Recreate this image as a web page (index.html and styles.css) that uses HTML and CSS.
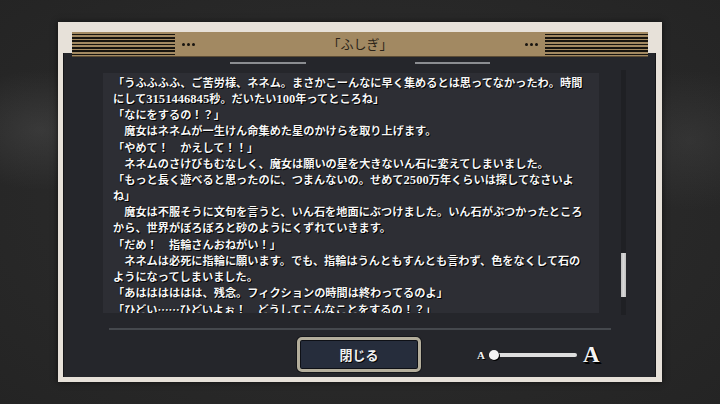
FILE: index.html
```html
<!DOCTYPE html>
<html lang="ja">
<head>
<meta charset="utf-8">
<link rel="stylesheet" href="styles.css">
</head>
<body>
<div class="frame">
  <div class="header">
    <div class="stripes"></div>
    <div class="dots"><span></span><span></span><span></span></div>
    <div class="title">「ふしぎ」</div>
    <div class="dots dots-right"><span></span><span></span><span></span></div>
    <div class="stripes"></div>
  </div>
  <div class="panel">
    <div class="tabs">
      <div class="tab"></div>
      <div class="tab tab-right"></div>
    </div>
    <div class="content">
      <div class="textbox">
        <div class="line">「うふふふふ、ご苦労様、ネネム。まさかこーんなに早く集めるとは思ってなかったわ。時間</div>
        <div class="line">にして<span class="num">3151446845</span>秒。だいたい<span class="num">100</span>年ってところね」</div>
        <div class="line">「なにをするの！？」</div>
        <div class="line">　魔女はネネムが一生けん命集めた星のかけらを取り上げます。</div>
        <div class="line">「やめて！　かえして！！」</div>
        <div class="line">　ネネムのさけびもむなしく、魔女は願いの星を大きないん石に変えてしまいました。</div>
        <div class="line">「もっと長く遊べると思ったのに、つまんないの。せめて<span class="num">2500</span>万年くらいは探してなさいよ</div>
        <div class="line">ね」</div>
        <div class="line">　魔女は不服そうに文句を言うと、いん石を地面にぶつけました。いん石がぶつかったところ</div>
        <div class="line">から、世界がぼろぼろと砂のようにくずれていきます。</div>
        <div class="line">「だめ！　指輪さんおねがい！」</div>
        <div class="line">　ネネムは必死に指輪に願います。でも、指輪はうんともすんとも言わず、色をなくして石の</div>
        <div class="line">ようになってしまいました。</div>
        <div class="line">「あはははははは、残念。フィクションの時間は終わってるのよ」</div>
        <div class="line">「ひどい<span class="cjk">……</span>ひどいよぉ！　どうしてこんなことをするの！？」</div>
      </div>
      <div class="scrolltrack"><div class="thumb"></div></div>
    </div>
    <div class="separator"></div>
    <div class="bottom">
      <div class="close-btn"><span>閉じる</span></div>
      <div class="slider">
        <span class="a-small">A</span>
        <div class="track"><div class="knob"></div></div>
        <span class="a-big">A</span>
      </div>
    </div>
  </div>
</div>
</body>
</html>
```
FILE: styles.css
```css
html, body {
  margin: 0;
  padding: 0;
}
body {
  width: 720px;
  height: 404px;
  overflow: hidden;
  background:
    radial-gradient(ellipse 90px 60px at 40px 130px, rgba(90,90,90,0.35), rgba(90,90,90,0) 100%),
    radial-gradient(ellipse 90px 70px at 690px 140px, rgba(80,80,80,0.3), rgba(80,80,80,0) 100%),
    radial-gradient(ellipse 500px 300px at 360px 200px, #2f2f2f, #242424 100%);
  font-family: "Liberation Serif", "Noto Sans CJK JP", serif;
}
.frame {
  margin: 22px 0 0 58px;
  width: 604px;
  height: 360px;
  box-sizing: border-box;
  background: #e7e1d9;
  padding-top: 10px;
  display: flex;
  flex-direction: column;
  box-shadow: 0 0 6px rgba(0,0,0,0.6);
}
.header {
  position: relative;
  z-index: 1;
  margin: 0 14px 0 14px;
  height: 25px;
  box-sizing: border-box;
  background: #a28962;
  border-bottom: 1px solid #5c4c35;
  display: flex;
  align-items: center;
}
.stripes {
  width: 103px;
  height: 24px;
  background: repeating-linear-gradient(to bottom, #a28962 0 1.6px, #17140f 1.6px 3.35px);
}
.dots {
  display: flex;
  gap: 2px;
  margin-left: 7px;
}
.dots-right {
  margin-left: 0;
  margin-right: 7px;
}
.dots span {
  width: 3px;
  height: 3px;
  border-radius: 50%;
  background: #17140f;
}
.title {
  flex: 1;
  text-align: center;
  font-family: "Noto Sans CJK JP", sans-serif;
  font-size: 13px;
  color: #2a2318;
  line-height: 24px;
}
.panel {
  margin: -4px 6px 5px 5px;
  height: 324px;
  background: #25262b;
  box-shadow: inset 1px 0 0 #151518, inset -1px 0 0 #151518;
  display: flex;
  flex-direction: column;
}
.tabs {
  display: flex;
  margin: 9px 0 0 167px;
  gap: 109px;
}
.tab {
  width: 76px;
  height: 2px;
  background: #8b8d91;
}
.tab-right {
  width: 75px;
}
.content {
  display: flex;
  margin: 6px 0 0 40px;
  height: 245px;
}
.textbox {
  margin-top: 3px;
  width: 496px;
  height: 240px;
  box-sizing: border-box;
  padding: 2px 0 0 10px;
  background: #2d2e34;
  overflow: hidden;
  color: #f6f6f6;
  font-size: 11.2px;
  font-weight: bold;
  line-height: 16.15px;
  text-shadow: 1px 1px 0 #000, 0 0 1px #000;
}
.line {
  white-space: nowrap;
}
.num {
  font-size: 12.6px;
}
.cjk {
  font-family: "Noto Sans CJK JP", sans-serif;
}
.scrolltrack {
  margin-left: 22px;
  width: 5px;
  height: 245px;
  background: #1f2024;
}
.thumb {
  margin-top: 183px;
  height: 44px;
  background: linear-gradient(to right, #bdbdbd, #d8d8d8, #bdbdbd);
}
.separator {
  margin: 13px 0 0 46px;
  width: 502px;
  height: 2px;
  background: #45484d;
}
.bottom {
  display: flex;
  align-items: center;
  margin: 7px 0 0 234px;
  height: 35px;
}
.close-btn {
  width: 124px;
  height: 35px;
  box-sizing: border-box;
  border: 3px solid #b4ae9c;
  border-radius: 5px;
  background: #262d3c;
  box-shadow: inset 0 0 0 1px #0e1016, 0 0 0 1px #15161a;
  display: flex;
  align-items: center;
  justify-content: center;
}
.close-btn span {
  font-family: "Noto Sans CJK JP", sans-serif;
  font-size: 13px;
  font-weight: bold;
  color: #f2f2f2;
  text-shadow: 1px 1px 0 #000;
}
.slider {
  display: flex;
  align-items: center;
  margin-left: 56px;
}
.a-small {
  font-family: "Liberation Serif", serif;
  font-weight: bold;
  font-size: 11px;
  color: #f4f4f4;
  text-shadow: 1px 1px 0 #000;
  margin-right: 4px;
}
.track {
  width: 88px;
  height: 4px;
  border-radius: 2px;
  background: #dedede;
  display: flex;
  align-items: center;
}
.knob {
  width: 10px;
  height: 10px;
  border-radius: 50%;
  background: #f4f4f4;
  box-shadow: 1px 1px 0 #000;
}
.a-big {
  font-family: "Liberation Serif", serif;
  font-weight: bold;
  font-size: 23px;
  color: #f4f4f4;
  text-shadow: 1px 1px 0 #000, 2px 2px 0 #000;
  margin-left: 6px;
}
```
